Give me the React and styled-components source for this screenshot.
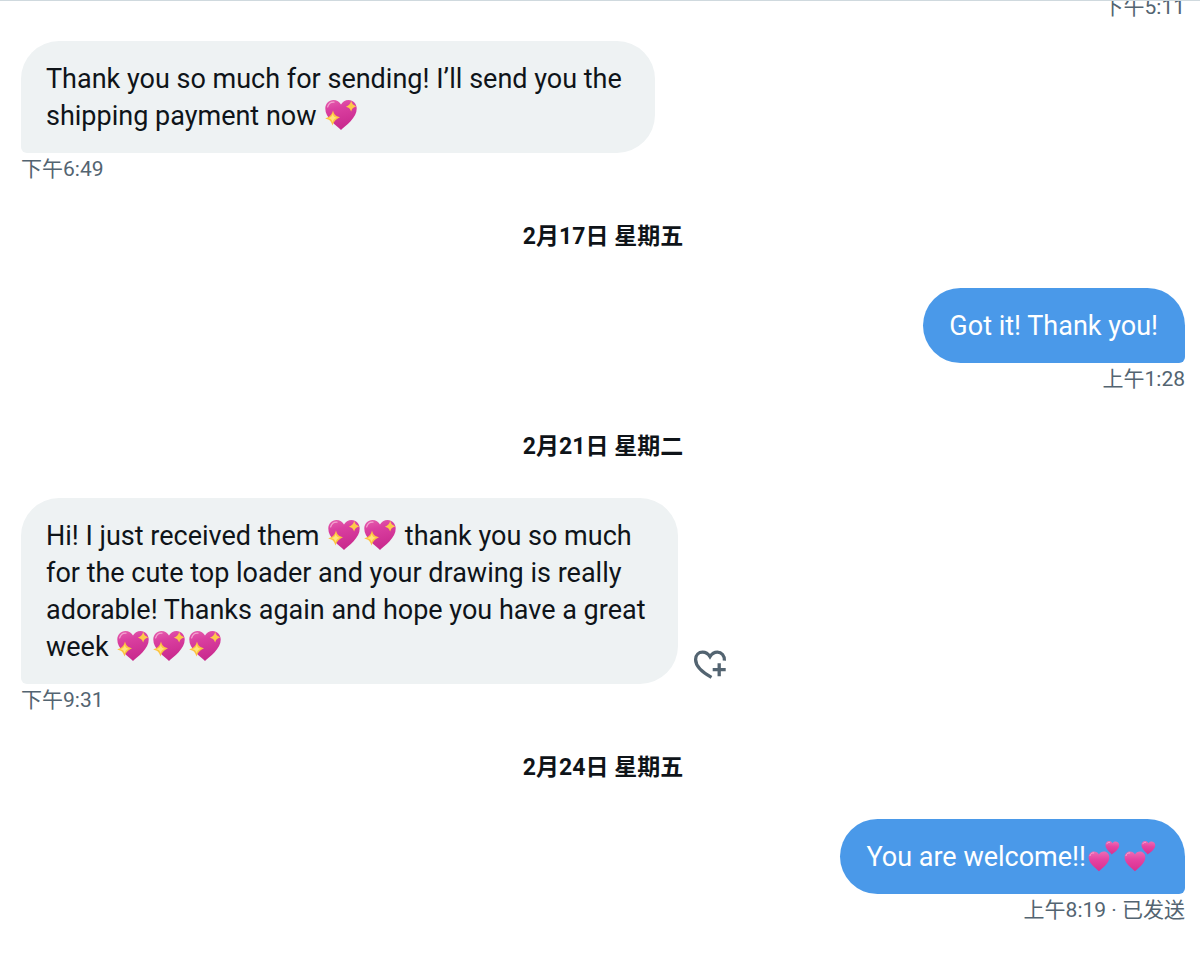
import React from 'react';
import styled, { createGlobalStyle } from 'styled-components';

const GlobalStyle = createGlobalStyle`
    * {
        box-sizing: border-box;
    }
    body {
        margin: 0;
        background: #ffffff;
        color: #0f1419;
        font-family: Roboto, "Noto Sans CJK SC", sans-serif;
    }
`
const Conversation = styled.main`
    border-top: 1px solid #cfd9de;
    overflow: hidden;
`
const MessageList = styled.div`
    display: flex;
    flex-direction: column;
    margin-top: -10px;
    padding: 0 15px 31px 21px;
`
const MessageGroup = styled.article`
    display: flex;
    flex-direction: column;
    align-items: ${props => props.$sent ? 'flex-end' : 'flex-start'};
    margin-top: ${props => props.$first ? '18px' : '0'};
`
const BubbleRow = styled.div`
    display: flex;
    align-items: flex-end;
    gap: 14px;
`
const Bubble = styled.p`
    margin: 0;
    padding: ${props => props.$sent ? '20px 27px 18px 26px' : '20px 33px 18px 25px'};
    border-radius: ${props => props.$sent ? '38px 38px 6px 38px' : '38px 38px 38px 6px'};
    background: ${props => props.$sent ? '#4a99e9' : '#eef2f3'};
    color: ${props => props.$sent ? '#ffffff' : '#0f1419'};
    font-size: 27px;
    line-height: 37px;
`
const Time = styled.div`
    align-self: ${props => props.$sent ? 'flex-end' : 'flex-start'};
    color: #536471;
    font-size: 21px;
    line-height: 32px;
`
const DateHeading = styled.h2`
    margin: 36px 0 35px;
    font-size: 23px;
    font-weight: 700;
    line-height: 32px;
    text-align: center;
`
const ReactButton = styled.button`
    display: flex;
    padding: 0 0 1px;
    border: 0;
    background: none;
    color: #536471;
    cursor: pointer;
`
const Emoji = styled.svg`
    width: 32px;
    height: 32px;
    margin: 0 2px;
    vertical-align: -6px;
`
const Gradients = styled.svg`
    display: block;
    width: 0;
    height: 0;
`

const HEART = 'M16 31C14 28.8 10 26 6.4 22.2C2.6 18.2 .3 14.4 .3 9.6C.3 4.8 3.8 1 8.4 1C11.8 1 14.6 2.8 16 5.6C17.4 2.8 20.2 1 23.6 1C28.2 1 31.7 4.8 31.7 9.6C31.7 14.4 29.4 18.2 25.6 22.2C22 26 18 28.8 16 31Z'

const HeartGradients = () => (
    <Gradients aria-hidden="true">
        <defs>
            <linearGradient id="heart-pink" x1="0" y1="0" x2="0.25" y2="1">
                <stop offset="0" stopColor="#e660ae" />
                <stop offset="0.35" stopColor="#da3fa0" />
                <stop offset="1" stopColor="#c92a8e" />
            </linearGradient>
            <linearGradient id="heart-light" x1="0" y1="0" x2="0" y2="1">
                <stop offset="0" stopColor="#ee6cb4" />
                <stop offset="0.4" stopColor="#e644a2" />
                <stop offset="1" stopColor="#d8308f" />
            </linearGradient>
        </defs>
    </Gradients>
)

const SparklingHeart = () => (
    <Emoji viewBox="0 0 32 32" role="img" aria-label="sparkling heart">
        <path d={HEART} fill="url(#heart-pink)" />
        <path d="M2.6 8C3.6 4.8 6.1 3 9 3.2" fill="none" stroke="#f3a3d0" strokeWidth="1.2" strokeLinecap="round" />
        <path d="M26.2 1.8C27.1 5 28 6 31.4 7.2C28 8.4 27.1 9.4 26.2 12.6C24.9 9.4 24 8.6 20.8 7.8C24 6.6 25.3 5.2 26.2 1.8Z" fill="#fdc94a" />
        <path d="M8 11.6C9.2 16 10.6 17 15 18.4C11 20 9.6 21.4 7.4 26.4C6.2 21.8 4.8 20.8 .2 19.4C4.8 18 6.4 16.6 8 11.6Z" fill="#fdc440" />
        <path d="M7.8 14.8C8.5 17.6 9.2 18.2 12 18.8C9.4 19.7 8.7 20.4 7.5 23.4C6.9 20.6 6.1 20 3.2 19.3C6.1 18.5 7 17.7 7.8 14.8Z" fill="#ffe27c" />
    </Emoji>
)

const TwoHearts = () => (
    <Emoji viewBox="0 0 32 32" role="img" aria-label="two hearts">
        <path d={HEART} fill="url(#heart-light)" transform="translate(.4 10.8) scale(.66)" />
        <path d={HEART} fill="url(#heart-light)" transform="translate(17.2 .8) rotate(4 6 6) scale(.44)" />
        <path d="M2 15.6C2.8 13.5 4 12.8 5.8 12.9" fill="none" stroke="#f7a8d2" strokeWidth="1" strokeLinecap="round" />
        <path d="M18.8 3.8C19.4 2.6 20.4 2.2 21.6 2.4" fill="none" stroke="#f7a8d2" strokeWidth=".8" strokeLinecap="round" />
    </Emoji>
)

const HeartPlusIcon = () => (
    <svg width="36" height="36" viewBox="0 0 36 36" fill="none" stroke="currentColor" strokeWidth="3.3" aria-hidden="true">
        <path d="M19.5 30.4C11 25.8 3.6 19.6 3.6 12.6C3.6 8 6.8 5.2 10.6 5.2C13.8 5.2 16.2 6.8 18 9.6C19.8 6.8 22.2 5.2 25.4 5.2C29.6 5.2 32.6 8.6 32.4 13.6" />
        <path d="M27.2 16.2V29.2M20.7 22.7H33.7" />
    </svg>
)

const Message = ({ sent, first, reaction, time, children }) => (
    <MessageGroup $sent={sent} $first={first}>
        <BubbleRow>
            <Bubble $sent={sent}>{children}</Bubble>
            {reaction && <ReactButton type="button" aria-label="Add reaction"><HeartPlusIcon /></ReactButton>}
        </BubbleRow>
        <Time $sent={sent}>{time}</Time>
    </MessageGroup>
)

const App = () => (
    <>
        <GlobalStyle />
        <Conversation>
            <HeartGradients />
            <MessageList>
                <Time $sent>下午5:11</Time>
                <Message first time="下午6:49">
                    Thank you so much for sending! I’ll send you the<br />
                    shipping payment now <SparklingHeart />
                </Message>
                <DateHeading>2月17日 星期五</DateHeading>
                <Message sent time="上午1:28">Got it! Thank you!</Message>
                <DateHeading>2月21日 星期二</DateHeading>
                <Message reaction time="下午9:31">
                    Hi! I just received them <SparklingHeart /><SparklingHeart /> thank you so much<br />
                    for the cute top loader and your drawing is really<br />
                    adorable! Thanks again and hope you have a great<br />
                    week <SparklingHeart /><SparklingHeart /><SparklingHeart />
                </Message>
                <DateHeading>2月24日 星期五</DateHeading>
                <Message sent time="上午8:19 · 已发送">
                    You are welcome!!<TwoHearts /><TwoHearts />
                </Message>
            </MessageList>
        </Conversation>
    </>
)

export default App;
